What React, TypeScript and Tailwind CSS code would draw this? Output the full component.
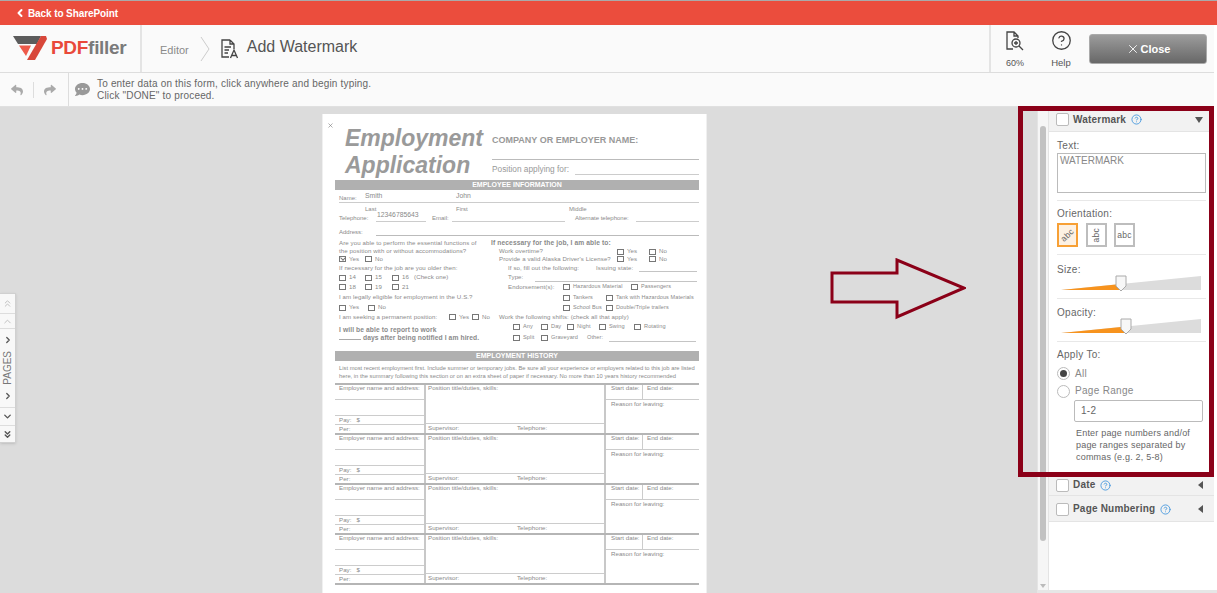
import { ChevronDown, ChevronLeft, ChevronRight, ChevronUp, ChevronsDown, ChevronsUp, CircleHelp, X } from "lucide-react";
import { FaCommentDots, FaReply, FaShare } from "react-icons/fa";

const Box = ({ checked }: { checked?: boolean }) => (
  <span className="relative w-[7px] h-[6px] border-[0.5px] border-[#777] shrink-0 mr-[3px]">
    {checked && <span className="absolute left-[1px] -top-[1px] w-[4px] h-[4px] border-l border-b border-[#777] -rotate-45" />}
  </span>
);

const Opt = ({ label, w, checked }: { label?: string; w?: number; checked?: boolean }) => (
  <span className="flex items-center shrink-0" style={{ width: w }}>
    <Box checked={checked} />
    {label}
  </span>
);

const Row = ({ className = "", children }: { className?: string; children?: React.ReactNode }) => (
  <div className={`flex items-center whitespace-nowrap ${className}`}>{children}</div>
);

const Line = ({ className = "" }: { className?: string }) => <span className={`border-b border-[#c4c4c4] h-[8px] ${className}`} />;

const JobBlock = () => (
  <div className="grid grid-cols-[89px_182px_93px] h-[50px] border-t-2 border-[#b5b5b5] text-[6.2px] text-[#8a8a8a] leading-none">
    <div className="flex flex-col">
      <div className="h-[15px] pl-[4px] border-b border-[#ccc] whitespace-nowrap">Employer name and address:</div>
      <div className="h-[16px] border-b border-[#ccc]" />
      <div className="h-[9px] pl-[4px] pt-[1px] border-b border-[#ccc]">Pay: &nbsp;&nbsp;$</div>
      <div className="pl-[4px] pt-[1px]">Per:</div>
    </div>
    <div className="flex flex-col border-x-2 border-[#c8c8c8]">
      <div className="h-[39px] pl-[2px] border-b border-[#ccc]">Position title/duties, skills:</div>
      <div className="flex pl-[2px] pt-[1px]">
        <span className="w-[89px]">Supervisor:</span>
        <span>Telephone:</span>
      </div>
    </div>
    <div className="flex flex-col">
      <div className="flex h-[15px] border-b border-[#ccc]">
        <div className="w-[37px] pl-[5px] border-r border-[#ccc]">Start date:</div>
        <div className="pl-[4px]">End date:</div>
      </div>
      <div className="pt-[1px] pl-[5px]">Reason for leaving:</div>
    </div>
  </div>
);

const Sheet = () => (
  <div className="relative w-[385px] h-[479px] shrink-0 bg-white border-x border-[#f0f0f0] overflow-hidden pl-[12px] pr-[7px] pt-[2px] font-['Liberation_Sans',sans-serif] text-[#8a8a8a]">
    <X className="absolute left-[4px] top-[8px] w-[7px] h-[7px] text-[#777]" />
    <div className="flex h-[64px]">
      <div className="w-[156px] pl-[10px] pt-[9px] text-[23px] leading-[27px] font-bold italic text-[#9a9a9a]">
        Employment<br />Application
      </div>
      <div className="flex-1 pt-[16px] pl-[1px]">
        <div className="h-[28px] border-b border-[#bbb] text-[9px] font-bold text-[#999] pt-[2px] whitespace-nowrap">COMPANY OR EMPLOYER NAME:</div>
        <div className="flex items-end h-[15px] text-[8.3px] text-[#999]">
          <span className="w-[83px] whitespace-nowrap">Position applying for:</span>
          <span className="flex-1 border-b border-[#ccc]" />
        </div>
      </div>
    </div>
    <div className="h-[10px] bg-[#b0b0b0] text-white text-[7px] leading-[10px] font-bold text-center">EMPLOYEE INFORMATION</div>
    <div className="text-[6px] leading-none">
      <div className="flex items-end h-[13px] border-b border-[#ccc] ml-[4px]">
        <span className="w-[26px] pb-[1px]">Name:</span>
        <span className="w-[91px] text-[6.8px] pb-[2px]">Smith</span>
        <span className="text-[6.8px] pb-[2px]">John</span>
      </div>
      <div className="flex ml-[30px] h-[9px] pt-[3px]">
        <span className="w-[91px]">Last</span>
        <span className="w-[113px]">First</span>
        <span>Middle</span>
      </div>
      <div className="flex items-end h-[10px] ml-[4px]">
        <span className="w-[37px] pb-[1px]">Telephone:</span>
        <span className="w-[50px] border-b border-[#ccc] text-[6.8px] pl-[1px] pb-[2px]">12346785643</span>
        <span className="w-[26px] pl-[6px] pb-[1px]">Email:</span>
        <span className="w-[113px] border-b border-[#ccc] h-full" />
        <span className="w-[71px] pl-[10px] pb-[1px] whitespace-nowrap">Alternate telephone:</span>
        <span className="flex-1 border-b border-[#ccc] h-full" />
      </div>
      <div className="flex items-end h-[14px] ml-[4px] mb-[3px]">
        <span className="w-[37px] pb-[1px]">Address:</span>
        <span className="flex-1 border-b border-[#bbb] h-full" />
      </div>
    </div>
    <div className="flex text-[6.1px] tracking-[0.1px] leading-none">
      <div className="w-[155px] pl-[4px]">
        <Row className="h-[9px]">Are you able to perform the essential functions of</Row>
        <Row className="h-[7px]">the position with or without accommodations?</Row>
        <Row className="h-[8px]">
          <Opt label="Yes" w={26} checked /> <Opt label="No" />
        </Row>
        <Row className="h-[10px]">If necessary for the job are you older then:</Row>
        <Row className="h-[9px]">
          <Opt label="14" w={26} /> <Opt label="15" w={27} /> <Opt label="16" w={22} /> (Check one)
        </Row>
        <Row className="h-[10px]">
          <Opt label="18" w={26} /> <Opt label="19" w={27} /> <Opt label="21" />
        </Row>
        <Row className="h-[11px]">I am legally eligible for employment in the U.S.?</Row>
        <Row className="h-[9px]">
          <Opt label="Yes" w={29} /> <Opt label="No" />
        </Row>
        <Row className="h-[10px] mb-[4px]">
          <span className="w-[110px]">I am seeking a permanent position:</span>
          <Opt label="Yes" w={23} /> <Opt label="No" />
        </Row>
        <div className="font-bold text-[6.7px] leading-[8px] whitespace-nowrap">
          I will be able to report to work
          <br />
          <span className="inline-block w-[22px] border-b border-[#aaa]" /> days after being notified I am hired.
        </div>
      </div>
      <div className="flex-1">
        <Row className="h-[9px] pl-[1px] font-bold text-[6.7px]">If necessary for the job, I am able to:</Row>
        <Row className="h-[7px] pl-[9px]">
          <span className="w-[118px]">Work overtime?</span>
          <Opt label="Yes" w={32} /> <Opt label="No" />
        </Row>
        <Row className="h-[8px] pl-[9px]">
          <span className="w-[118px]">Provide a valid Alaska Driver's License?</span>
          <Opt label="Yes" w={32} /> <Opt label="No" />
        </Row>
        <Row className="h-[10px] pl-[18px]">
          <span className="w-[88px]">If so, fill out the following:</span>
          <span className="w-[43px]">Issuing state:</span>
          <Line className="w-[58px]" />
        </Row>
        <Row className="h-[9px] pl-[18px]">
          <span className="w-[27px]">Type:</span>
          <Line className="w-[162px]" />
        </Row>
        <Row className="h-[10px] pl-[18px] text-[5.5px]">
          <span className="w-[55px] text-[6.1px]">Endorsement(s):</span>
          <Opt label="Hazardous Material" w={68} /> <Opt label="Passengers" />
        </Row>
        <Row className="h-[11px] pl-[73px] text-[5.5px]">
          <Opt label="Tankers" w={43} /> <Opt label="Tank with Hazardous Materials" />
        </Row>
        <Row className="h-[9px] pl-[73px] text-[5.5px]">
          <Opt label="School Bus" w={43} /> <Opt label="Double/Triple trailers" />
        </Row>
        <Row className="h-[10px] pl-[9px]">Work the following shifts: (check all that apply)</Row>
        <Row className="h-[10px] pl-[23px] text-[5.6px]">
          <Opt label="Any" w={28} /> <Opt label="Day" w={26} /> <Opt label="Night" w={32} /> <Opt label="Swing" w={35} /> <Opt label="Rotating" />
        </Row>
        <Row className="h-[12px] pl-[23px] text-[5.6px]">
          <Opt label="Split" w={28} /> <Opt label="Graveyard" w={46} />
          <span className="w-[22px]">Other:</span>
          <Line className="w-[87px]" />
        </Row>
      </div>
    </div>
    <div className="h-[10px] mt-[7px] bg-[#b0b0b0] text-white text-[7px] leading-[10px] font-bold text-center">EMPLOYMENT HISTORY</div>
    <div className="text-[5.8px] leading-[7.5px] pt-[4px] pl-[4px] h-[22px] whitespace-nowrap">
      List most recent employment first. Include summer or temporary jobs. Be sure all your experience or employers related to this job are listed
      <br />
      here, in the summary following this section or on an extra sheet of paper if necessary. No more than 10 years history recommended
    </div>
    <JobBlock />
    <JobBlock />
    <JobBlock />
    <JobBlock />
    <div className="border-t-2 border-[#b5b5b5]" />
  </div>
);

const PagesTab = () => (
  <div className="absolute left-0 top-[186px] w-[16px] h-[150px] flex flex-col items-center bg-[#f8f8f8] border border-l-0 border-[#d0d0d0] shadow-sm text-[#555] font-['Liberation_Sans',sans-serif]">
    <div className="h-[20px] w-full flex items-center justify-center border-b border-[#ddd]">
      <ChevronsUp className="w-[11px] h-[11px] text-[#bbb]" />
    </div>
    <div className="h-[15px] w-full flex items-center justify-center border-b border-[#ddd]">
      <ChevronUp className="w-[11px] h-[11px] text-[#bbb]" />
    </div>
    <div className="h-[79px] w-full flex flex-col items-center justify-between py-[6px] border-b border-[#ddd]">
      <ChevronRight className="w-[10px] h-[10px]" strokeWidth={3} />
      <span className="text-[10px] leading-none [writing-mode:vertical-rl] rotate-180 text-[#777]">PAGES</span>
      <ChevronRight className="w-[10px] h-[10px]" strokeWidth={3} />
    </div>
    <div className="h-[18px] w-full flex items-center justify-center border-b border-[#ddd]">
      <ChevronDown className="w-[11px] h-[11px]" strokeWidth={3} />
    </div>
    <div className="flex-1 w-full flex items-center justify-center">
      <ChevronsDown className="w-[11px] h-[11px]" strokeWidth={3} />
    </div>
  </div>
);

const Wedge = ({ at }: { at: number }) => (
  <svg width="146" height="20" viewBox="0 0 146 20" className="block">
    <path d="M1 17 L141 3 L141 17 Z" fill="#dcdcdc" />
    <path d={`M1 17 L${at} ${17 - (at - 1) * 0.1} L${at} 17 Z`} fill="#f7931e" />
    <path d={`M${at - 5} 3 H${at + 5} V13 L${at} 18 L${at - 5} 13 Z`} fill="#f7f7f7" stroke="#aaa" />
  </svg>
);

const SectionHead = ({ title, open, h }: { title: string; open?: boolean; h: string }) => (
  <div className={`flex items-center bg-[#f2f2f2] px-[7px] pt-[1px] border-b border-[#e4e4e4] ${h}`}>
    <span className="w-[13px] h-[13px] bg-white border border-[#bbb] rounded-[2px] mr-[4px]" />
    <span className="text-[10px] font-bold text-[#555] tracking-[0.2px]">{title}</span>
    <CircleHelp className="w-[11px] h-[11px] text-[#4a9ade] ml-[5px]" />
    <span className={`ml-auto mr-[4px] w-0 h-0 ${open ? "border-x-[4px] border-x-transparent border-t-[6px] border-t-[#555]" : "border-y-[4px] border-y-transparent border-r-[5px] border-r-[#555]"}`} />
  </div>
);

const Orient = ({ active, className }: { active?: boolean; className: string }) => (
  <span className={`w-[21px] h-[24px] flex items-center justify-center border-2 text-[8.5px] ${active ? "border-[#f7a035] bg-[#fdf1e3]" : "border-[#bdbdbd] bg-white"}`}>
    <span className={className}>abc</span>
  </span>
);

const Divider = () => <div className="border-b border-[#e8e8e8]" />;

const Panel = () => (
  <div className="w-[165px] h-full bg-white font-['Liberation_Sans',sans-serif] text-[#666] text-[10px] tracking-[0.3px] leading-none">
    <SectionHead title="Watermark" open h="h-[25px]" />
    <div className="px-[8px]">
      <div className="pt-[9px] h-[21px]">Text:</div>
      <div className="h-[40px] border border-[#bbb] px-[2px] pt-[2px] text-[10px] text-[#888] tracking-normal">WATERMARK</div>
      <div className="h-[7px]" />
      <Divider />
      <div className="pt-[8px] h-[22px]">Orientation:</div>
      <div className="flex gap-[7.5px]">
        <Orient active className="-rotate-45" />
        <Orient className="-rotate-90" />
        <Orient className="" />
      </div>
      <div className="h-[7px]" />
      <Divider />
      <div className="pt-[10px] h-[18px]">Size:</div>
      <div className="pl-[3px] h-[25px]"><Wedge at={61} /></div>
      <Divider />
      <div className="pt-[9px] h-[17px]">Opacity:</div>
      <div className="pl-[3px] h-[25px]"><Wedge at={66} /></div>
      <Divider />
      <div className="pt-[8px] h-[23px]">Apply To:</div>
      <div className="flex items-center h-[17px] text-[#888]">
        <span className="w-[13px] h-[13px] rounded-full border border-[#bbb] flex items-center justify-center mr-[5px]">
          <span className="w-[7px] h-[7px] rounded-full bg-[#444]" />
        </span>
        All
      </div>
      <div className="flex items-center h-[18px] text-[#888]">
        <span className="w-[13px] h-[13px] rounded-full border border-[#bbb] mr-[5px]" />
        Page Range
      </div>
      <div className="ml-[17px] mr-[3px] h-[22px] border border-[#bbb] rounded-[2px] flex items-center pl-[6px] text-[#666]">1-2</div>
      <div className="ml-[19px] mt-[5px] text-[9px] tracking-[0.2px] leading-[12px] whitespace-nowrap">
        Enter page numbers and/of
        <br />
        page ranges separated by
        <br />
        commas (e.g. 2, 5-8)
      </div>
    </div>
    <div className="h-[11px]" />
    <SectionHead title="Date" h="h-[22px]" />
    <SectionHead title="Page Numbering" h="h-[26px]" />
  </div>
);

export default function App() {
  return (
    <div className="relative w-[1217px] h-[593px] overflow-hidden bg-white font-['Liberation_Sans',sans-serif] flex flex-col">
      <div className="h-[25px] shrink-0 bg-[#eb4d3d] border-t border-[#aaa] flex items-center pl-[14px] text-white text-[10px] font-bold tracking-[-0.1px]">
        <ChevronLeft className="w-[12px] h-[12px] mr-[2px]" strokeWidth={4} />
        Back to SharePoint
      </div>

      <div className="h-[48px] shrink-0 w-[1214px] bg-[#fafafa] border-b border-[#ddd] flex items-center">
        <div className="w-[142px] h-full shrink-0 border-r-2 border-[#e4e4e4] flex items-center pl-[13px]">
          <svg width="34" height="25" viewBox="0 0 34 25" className="mr-[4px]">
            <path d="M0 0 H28 L24 8 H5 Z" fill="#5c5c5c" />
            <path d="M6 9.5 H18 L13 20 Z" fill="#ee5a4a" />
            <path d="M28 0 H33 L34 3 L22 24 H14 Z" fill="#d8473a" />
          </svg>
          <span className="text-[19px] font-bold text-[#e9493a] tracking-[-0.3px]">PDF</span>
          <span className="text-[19px] font-bold text-[#7a7a7a] tracking-[-0.3px]">filler</span>
        </div>
        <span className="ml-[18px] mt-[3px] text-[11px] text-[#8a8a8a]">Editor</span>
        <svg width="10" height="24" viewBox="0 0 10 24" className="ml-[11px]">
          <path d="M1 0 L9 12 L1 24" fill="none" stroke="#ccc" />
        </svg>
        <svg width="19" height="20" viewBox="0 0 19 20" className="ml-[10px]" fill="none" stroke="#444" strokeWidth="1.3">
          <path d="M10 1 H2 V18 H9 M10 1 L14 5 V10 M10 1 V5 H14" />
          <path d="M4.5 8 H11 M4.5 11 H9 M4.5 14 H8" />
          <path d="M10.5 19 L14 11 L17.5 19 M12 16.5 H16" />
        </svg>
        <span className="ml-[8px] text-[16px] text-[#555] -mt-[3px]">Add Watermark</span>

        <div className="ml-auto h-full flex items-center border-l-2 border-[#e4e4e4] pl-[14px] pr-[7px]">
          <div className="w-[20px] mt-[4px] flex flex-col items-center text-[9px] text-[#555]">
            <svg width="18" height="20" viewBox="0 0 18 20" fill="none" stroke="#444" strokeWidth="1.3">
              <path d="M7 18 H1 V1 H8 L12 5 V7 M8 1 V5 H12" />
              <circle cx="10" cy="12" r="4" />
              <path d="M13 15 L17 19 M8 12 H12 M10 10 V14" />
            </svg>
            <span className="mt-[6px]">60%</span>
          </div>
          <div className="w-[22px] ml-[25px] mt-[4px] flex flex-col items-center text-[9.5px] text-[#555]">
            <CircleHelp className="w-[21px] h-[21px] text-[#444]" strokeWidth={1.5} />
            <span className="mt-[5px]">Help</span>
          </div>
          <div className="ml-[17px] w-[118px] h-[30px] mt-[1px] rounded-[3px] border border-[#aaa] bg-gradient-to-b from-[#9c9c9c] to-[#686868] flex items-center justify-center text-white text-[11px] font-bold">
            <X className="w-[14px] h-[14px] mr-[1px]" strokeWidth={1.5} />
            Close
          </div>
        </div>
      </div>

      <div className="h-[34px] shrink-0 w-[1214px] bg-[#fafafa] border-b border-[#e0e0e0] flex items-center">
        <div className="w-[69px] h-full shrink-0 border-r border-[#ddd] flex items-center pl-[10px]">
          <FaReply className="w-[14px] h-[12px] text-[#aaa]" />
          <span className="h-[16px] border-l border-[#ddd] mx-[9px]" />
          <FaShare className="w-[14px] h-[12px] text-[#aaa]" />
        </div>
        <FaCommentDots className="ml-[5px] w-[17px] h-[15px] text-[#999]" />
        <div className="ml-[6px] text-[10px] leading-[12px] text-[#666] tracking-[0.18px]">
          To enter data on this form, click anywhere and begin typing.
          <br />
          Click "DONE" to proceed.
        </div>
      </div>

      <div className="relative flex-1 min-h-0 bg-[#dcdcdc] flex">
        <PagesTab />
        <div className="w-[1037px] shrink-0 pt-[7px] pl-[322px]">
          <Sheet />
        </div>
        <div className="w-[12px] shrink-0 bg-[#f6f6f6] border-x border-[#e4e4e4] flex flex-col items-center">
          <div className="mt-[19px] w-[6px] h-[415px] rounded-full bg-[#c2c2c2]" />
          <span className="mt-auto mb-[5px] w-0 h-0 border-x-[3px] border-x-transparent border-t-[4px] border-t-[#bbb]" />
        </div>
        <Panel />
        <div className="flex-1 bg-white" />
        <div className="absolute left-0 right-0 bottom-0 h-[3px] bg-[#e6e6e6] ml-[1037px]" />
      </div>

      <svg width="136" height="64" viewBox="0 0 136 64" className="absolute left-[830px] top-[258px]" fill="none" stroke="#8b0018" strokeWidth="3">
        <path d="M2 15 H67 V2 L134 30 L67 59 V44 H2 Z" />
      </svg>
      <div className="absolute left-[1018px] top-[106px] w-[196px] h-[371px] border-[5px] border-[#8b0018]" />
    </div>
  );
}
